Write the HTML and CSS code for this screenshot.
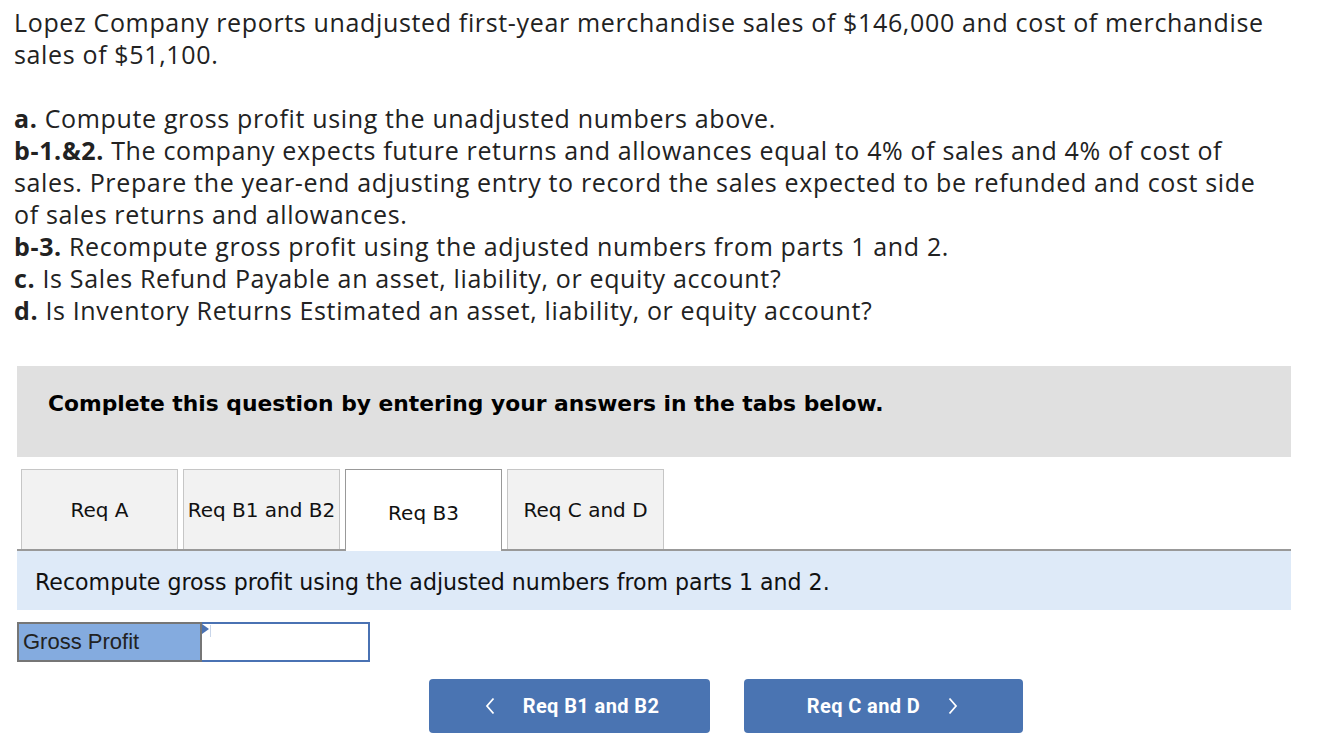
FILE: index.html
```html
<!DOCTYPE html>
<html lang="en">
<head>
<meta charset="utf-8">
<title>Lopez Company</title>
<link rel="stylesheet" href="styles.css">
</head>
<body>
<div class="page">
  <div class="question">
    <p class="intro">Lopez Company reports unadjusted first-year merchandise sales of $146,000 and cost of merchandise sales of $51,100.</p>
    <p class="parts">
      <span class="line"><b>a.</b> Compute gross profit using the unadjusted numbers above.</span>
      <span class="line"><b>b-1.&amp;2.</b> The company expects future returns and allowances equal to 4% of sales and 4% of cost of sales. Prepare the year-end adjusting entry to record the sales expected to be refunded and cost side of sales returns and allowances.</span>
      <span class="line"><b>b-3.</b> Recompute gross profit using the adjusted numbers from parts 1 and 2.</span>
      <span class="line"><b>c.</b> Is Sales Refund Payable an asset, liability, or equity account?</span>
      <span class="line"><b>d.</b> Is Inventory Returns Estimated an asset, liability, or equity account?</span>
    </p>
  </div>

  <div class="widget">
    <div class="banner">Complete this question by entering your answers in the tabs below.</div>

    <div class="tabs">
      <div class="tab">Req A</div>
      <div class="tab">Req B1 and B2</div>
      <div class="tab active">Req B3</div>
      <div class="tab">Req C and D</div>
    </div>

    <div class="instr">Recompute gross profit using the adjusted numbers from parts 1 and 2.</div>

    <table class="answer">
      <tr>
        <td class="label">Gross Profit</td>
        <td class="field"><span class="marker"></span><span class="caret"></span></td>
      </tr>
    </table>

    <div class="nav">
      <button class="navbtn prev" type="button">
        <svg class="chev" width="10" height="18" viewBox="0 0 10 18"><path d="M8.5 1.5 L2 9 L8.5 16.5" fill="none" stroke="#fff" stroke-width="1.8"/></svg>
        <span>Req B1 and B2</span>
      </button>
      <button class="navbtn next" type="button">
        <span>Req C and D</span>
        <svg class="chev" width="10" height="18" viewBox="0 0 10 18"><path d="M1.5 1.5 L8 9 L1.5 16.5" fill="none" stroke="#fff" stroke-width="1.8"/></svg>
      </button>
    </div>
  </div>
</div>
</body>
</html>
```

FILE: styles.css
```css
* { box-sizing: border-box; }

html, body {
  margin: 0;
  padding: 0;
  background: #fff;
}

.page {
  width: 1318px;
  padding: 0 27px 0 17px;
}

.question {
  font-family: "Open Sans", "Lato", sans-serif;
  font-size: 25px;
  letter-spacing: 0.65px;
  line-height: 32px;
  color: #222;
  margin-left: -3px;
  width: 1262px;
  padding-top: 6px;
}

.question p {
  margin: 0;
}

.intro {
  margin-bottom: 32px !important;
}

.parts .line {
  display: block;
}

.parts b {
  font-weight: 700;
}

.widget {
  margin-top: 40px;
  width: 1274px;
}

.banner {
  background: #e0e0e0;
  height: 91px;
  padding: 25px 31px 0;
  font-family: "DejaVu Sans", Verdana, sans-serif;
  font-weight: 700;
  font-size: 21.8px;
  line-height: 26px;
  color: #000;
}

.tabs {
  display: flex;
  gap: 5px;
  margin-top: 12px;
  padding-left: 4px;
  border-bottom: 2px solid #999;
  height: 82px;
}

.tab {
  width: 157px;
  height: 80px;
  background: #f2f2f2;
  border: 1px solid #c6c6c6;
  border-bottom: 0;
  display: flex;
  align-items: center;
  justify-content: center;
  font-family: "DejaVu Sans", Verdana, sans-serif;
  font-size: 20px;
  color: #111;
  white-space: nowrap;
}

.tab.active {
  position: relative;
  height: 82px;
  background: #fff;
  border-color: #999;
  padding-top: 4px;
}

.instr {
  background: #deeaf8;
  height: 59px;
  padding: 2px 18px 0;
  display: flex;
  align-items: center;
  font-family: "DejaVu Sans", Verdana, sans-serif;
  font-size: 22.1px;
  color: #111;
}

.answer {
  margin-top: 12px;
  border-collapse: collapse;
  border: 2px solid #767676;
}

.answer td {
  padding: 0;
  height: 38px;
}

.answer .label {
  width: 183px;
  background: #84abdf;
  border-right: 2px solid #767676;
  font-family: "Liberation Sans", Arial, sans-serif;
  font-size: 22px;
  color: #222;
  padding-left: 4px;
}

.answer .field {
  width: 168px;
  background: #fff;
  border: 2px solid #4a72b3;
  position: relative;
}

.marker {
  position: absolute;
  top: 0;
  left: 0;
  width: 0;
  height: 0;
  border-top: 5px solid transparent;
  border-bottom: 5px solid transparent;
  border-left: 7px solid #4a72b3;
}

.caret {
  position: absolute;
  top: 1px;
  left: 8px;
  width: 1px;
  height: 12px;
  background: #c9d6ea;
}

.nav {
  display: flex;
  gap: 34px;
  margin-top: 17px;
  padding-left: 412px;
}

.navbtn {
  height: 54px;
  border: 0;
  border-radius: 4px;
  background: #4a74b2;
  color: #fff;
  font-family: "Roboto", "Liberation Sans", sans-serif;
  font-weight: 700;
  font-size: 20px;
  letter-spacing: 0.4px;
  display: flex;
  align-items: center;
  justify-content: center;
  gap: 28px;
  padding: 0;
}

.navbtn.prev { width: 281px; padding-left: 5px; }
.navbtn.next { width: 279px; padding-right: 2px; }
.chev { display: block; }
```
